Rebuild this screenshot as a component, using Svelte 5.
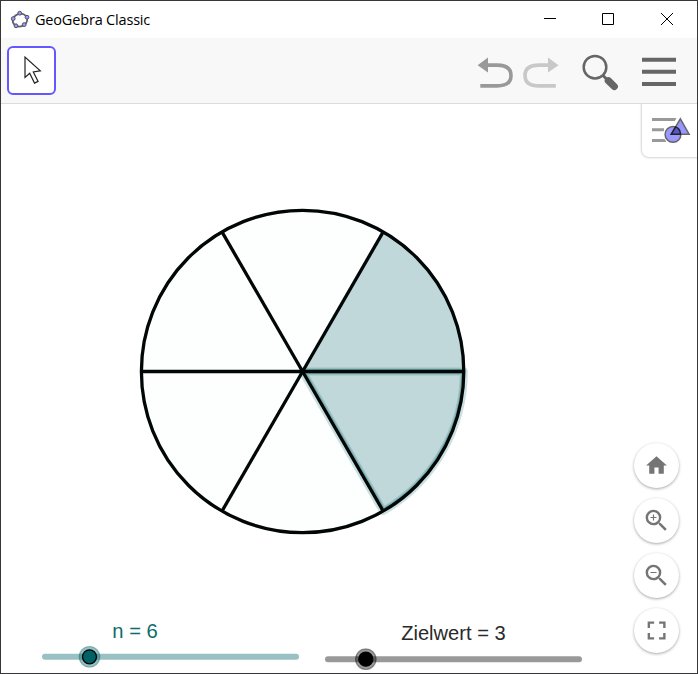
<script>
  const n = 6;
  const target = 3;
  const cx = 302.6, cy = 371.5, r = 161.2;
  const point = (i) => {
    const a = (i * 2 * Math.PI) / n;
    return [cx + r * Math.cos(a), cy - r * Math.sin(a)];
  };
  const sector = (i) => {
    const [x1, y1] = point(i);
    const [x2, y2] = point(i + 1);
    return `M${cx} ${cy}L${x1} ${y1}A${r} ${r} 0 0 0 ${x2} ${y2}Z`;
  };
  const spokes = Array.from({ length: n }, (_, i) => point(i));
  const sliders = [
    { label: `n = ${n}`, x: 42, y: 656.8, knob: 89.5, tx: 112.3, ty: 638, tw: 45.5, color: '#006266', text: '#0d6c70' },
    { label: `Zielwert = ${target}`, x: 325, y: 659.2, knob: 365.8, tx: 401.2, ty: 640, tw: 104.5, color: '#000000', text: '#2a2a2a' }
  ];
</script>

<div class="window">
  <header class="titlebar">
    <svg class="logo" width="20" height="20" viewBox="0 0 20 20">
      <ellipse cx="10" cy="10.1" rx="7.4" ry="6.3" transform="rotate(-18 10 10.1)" fill="none" stroke="#606060" stroke-width="1.8" />
      <g fill="#9999ff" stroke="#50506a" stroke-width="1">
        <circle cx="9.7" cy="3.2" r="1.9" /><circle cx="17" cy="7.2" r="1.9" /><circle cx="14.2" cy="14.6" r="1.9" />
        <circle cx="6" cy="15.8" r="1.9" /><circle cx="3.2" cy="8.6" r="1.9" />
      </g>
    </svg>
    <span class="title">GeoGebra Classic</span>
    <div class="controls">
      <svg width="46" height="37" viewBox="0 0 46 37"><path d="M11 17.5h12" stroke="#000" /></svg>
      <svg width="46" height="37" viewBox="0 0 46 37"><path d="M11.5 12.5h11v11h-11z" fill="none" stroke="#000" /></svg>
      <svg width="46" height="37" viewBox="0 0 46 37"><path d="M12 12l12 12M24 12L12 24" stroke="#000" /></svg>
    </div>
  </header>

  <nav class="toolbar">
    <button class="tool" aria-label="Move">
      <svg width="45" height="45" viewBox="0 0 45 45">
        <path d="M16 9v20.5l4.7-4.3 4.8 9.9 3.6-1.7-4.8-9.5 7-1z" fill="#fff" stroke="#222" stroke-width="1.2" />
      </svg>
    </button>
    <svg class="actions" width="210" height="60" viewBox="470 40.5 210 60" fill="none">
      <g stroke="#999" stroke-width="3.6">
        <path d="M487 64.6h10c9 0 14 3 14 10.4s-5 10.4-14 10.4h-16.7" />
        <path d="M477.6 64.7L488 57v15z" fill="#999" stroke="none" />
      </g>
      <g stroke="#c8c8c8" stroke-width="3.6">
        <path d="M549 64.6h-10c-9 0-14 3-14 10.4s5 10.4 14 10.4h16.8" />
        <path d="M558.5 64.7L548 57v15z" fill="#c8c8c8" stroke="none" />
      </g>
      <g stroke="#666">
        <circle cx="595" cy="66.7" r="11.3" stroke-width="2.5" />
        <path d="M602.5 74.5l4 4" stroke-width="3" />
        <path d="M608.3 80.2l6 5.8" stroke-width="7.2" stroke-linecap="round" />
        <path d="M642 59.2h34M642 71.3h34M642 83.4h34" stroke-width="4" />
      </g>
    </svg>
  </nav>

  <main>
    <svg class="graphics" width="696" height="569" viewBox="1 104 696 569">
      <circle {cx} {cy} {r} fill="#fdfefe" />
      <path d={sector(5)} fill="none" stroke="#006266" stroke-opacity=".2" stroke-width="8" stroke-linejoin="round" />
      <path d={sector(0)} fill="#c1d8da" />
      <path d={sector(5)} fill="#c1d8da" />
      <clipPath id="inner"><path d={sector(5)} /><path d={sector(0)} /></clipPath>
      <g clip-path="url(#inner)" fill="none" stroke="#006266">
        <path d={sector(5)} stroke-opacity=".18" stroke-width="8" />
        <path d={sector(5)} stroke-opacity=".25" stroke-width="5.5" />
      </g>
      <g stroke="#000706" stroke-width="3.3" fill="none">
        <circle {cx} {cy} {r} />
        {#each spokes as [x, y]}
          <path d="M{cx} {cy}L{x} {y}" />
        {/each}
      </g>
      {#each sliders as s}
        <text x={s.tx} y={s.ty} textLength={s.tw} lengthAdjust="spacingAndGlyphs" fill={s.text}>{s.label}</text>
        <path d="M{s.x + 3} {s.y}h251" stroke={s.color} stroke-opacity=".4" stroke-width="6" stroke-linecap="round" />
        <circle cx={s.knob} cy={s.y} r="10.5" fill={s.color} fill-opacity=".4" />
        <circle cx={s.knob} cy={s.y} r="10.3" fill="none" stroke={s.color} stroke-opacity=".3" stroke-width="1.2" />
        <circle cx={s.knob} cy={s.y} r="7" fill={s.color} stroke="#000" stroke-width="1.3" />
      {/each}
    </svg>

    <button class="stylebar" aria-label="Style bar">
      <svg width="55" height="53" viewBox="642 104 55 53">
        <path d="M652 119.5h25M652 129.7h12M652 140.4h14" stroke="#999" stroke-width="3" />
        <path d="M680.5 115L668 137h6" fill="none" stroke="#fff" stroke-width="4" />
        <circle cx="673" cy="134.4" r="9.8" fill="#fff" />
        <circle cx="673" cy="134.4" r="7.9" fill="#9999ff" stroke="#666" stroke-width="1.5" />
        <path d="M680.3 118.8l-9 15.4h17.8z" fill="#8c8cff" fill-opacity=".9" stroke="#666" stroke-width="1.5" />
        <path d="M671.3 134.2l4.3-7.3c3 1 4.7 4 4.9 7.3z" fill="#5555cc" stroke="#222" stroke-width="1.5" />
      </svg>
    </button>

    <div class="zoom">
      <button aria-label="Home"><svg viewBox="0 0 24 24"><path d="M10 20v-6h4v6h5v-8h3L12 3 2 12h3v8z" /></svg></button>
      <button class="lens" aria-label="Zoom in"><svg viewBox="0 0 24 24"><path d="M15.5 14h-.79l-.28-.27A6.47 6.47 0 0 0 16 9.5 6.5 6.5 0 1 0 9.5 16c1.61 0 3.09-.59 4.23-1.57l.27.28v.79l5 4.99L20.49 19zM9.5 14a4.5 4.5 0 1 1 0-9 4.5 4.5 0 0 1 0 9zm2.5-4h-2v2H9v-2H7V9h2V7h1v2h2z" /></svg></button>
      <button class="lens" aria-label="Zoom out"><svg viewBox="0 0 24 24"><path d="M15.5 14h-.79l-.28-.27A6.47 6.47 0 0 0 16 9.5 6.5 6.5 0 1 0 9.5 16c1.61 0 3.09-.59 4.23-1.57l.27.28v.79l5 4.99L20.49 19zM9.5 14a4.5 4.5 0 1 1 0-9 4.5 4.5 0 0 1 0 9zM7 9h5v1H7z" /></svg></button>
      <button aria-label="Fullscreen"><svg viewBox="0 0 24 24"><path d="M5.8 14.5H3.5V20.7H9.7V18.4H5.8zM3.5 9.5h2.3V5.6h3.9V3.3H3.5zM18.4 18.4h-3.9v2.3h6.2v-6.2h-2.3zM14.5 3.3v2.3h3.9v3.9h2.3V3.3z" /></svg></button>
    </div>
  </main>
</div>

<style>
  :global(body) { margin: 0; }
  .window {
    box-sizing: border-box;
    width: 698px;
    height: 674px;
    border: 1px solid #37373a;
    background: #fff;
    display: flex;
    flex-direction: column;
    overflow: hidden;
  }
  svg { display: block; flex: none; }
  button { padding: 0; border: 0; background: #fff; }
  .titlebar { height: 37px; flex: none; display: flex; align-items: center; padding-left: 9px; }
  .title {
    margin-left: 5px;
    font: 14.5px/20px "Open Sans", "Noto Sans", sans-serif;
    letter-spacing: -0.18px;
    color: #000;
    white-space: nowrap;
  }
  .controls { margin-left: auto; display: flex; gap: 12px; padding-right: 2px; }
  .toolbar {
    box-sizing: border-box;
    height: 66px;
    flex: none;
    background: #f8f8f8;
    border-bottom: 1px solid #dcdcdc;
    display: flex;
    align-items: center;
    justify-content: space-between;
    padding: 0 17px 0 6px;
  }
  .tool { box-sizing: border-box; width: 49px; height: 49px; border: 2px solid #6557ff; border-radius: 6px; }
  main { flex: 1; position: relative; min-height: 0; }
  text { font: 20.6px "Liberation Sans", Arial, sans-serif; }
  .stylebar {
    position: absolute;
    top: 0;
    right: 0;
    width: 55px;
    height: 53px;
    border-radius: 0 0 0 7px;
    box-shadow: 0 0 2px 1px #d4d4d4;
    clip-path: inset(0 0 -4px -4px);
  }
  .zoom { position: absolute; right: 18px; bottom: 20px; display: flex; flex-direction: column; gap: 10px; }
  .zoom button {
    width: 45px;
    height: 45px;
    border-radius: 50%;
    display: flex;
    align-items: center;
    justify-content: center;
    box-shadow: 0 1px 3px rgba(0, 0, 0, .35);
  }
  .zoom svg { width: 25px; height: 25px; fill: #757575; }
  .zoom .lens svg { width: 29px; height: 29px; }
</style>
